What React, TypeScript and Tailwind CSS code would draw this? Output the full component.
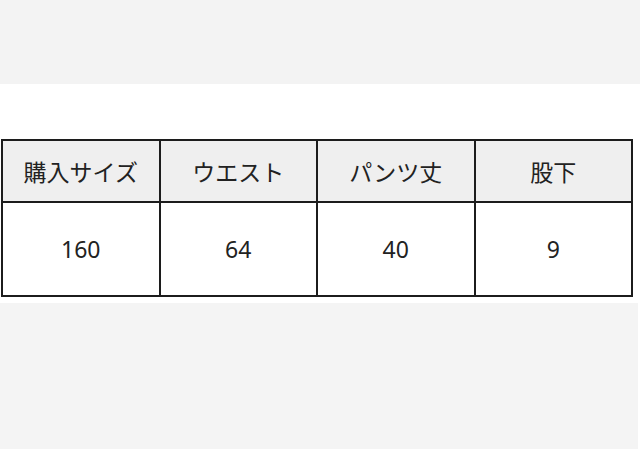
const headers = ['購入サイズ', 'ウエスト', 'パンツ丈', '股下']
const values = ['160', '64', '40', '9']

const App = () => {
    return (
        <div
            className="w-[640px] h-[449px] bg-[#f4f4f4] flex flex-col"
            style={{ fontFamily: '"Noto Sans", "Noto Sans CJK JP", sans-serif' }}
        >
            <div className="h-[84px] bg-[#f3f3f3]" />
            <div className="h-[219px] bg-white pt-[55px] pl-px">
                <table className="w-[632px] border-collapse text-[23px] text-[#222]">
                    <thead>
                        <tr className="bg-[#efefef]">
                            {headers.map((h) => (
                                <th
                                    key={h}
                                    className="h-[62px] w-1/4 border-2 border-[#1c1c1c] font-normal text-center pt-[3px]"
                                >
                                    {h}
                                </th>
                            ))}
                        </tr>
                    </thead>
                    <tbody>
                        <tr className="bg-white">
                            {values.map((v, i) => (
                                <td
                                    key={i}
                                    className="h-[94px] border-2 border-[#1c1c1c] text-center"
                                >
                                    {v}
                                </td>
                            ))}
                        </tr>
                    </tbody>
                </table>
            </div>
            <div className="flex-1 flex">
                <div className="flex-1 bg-[#f4f4f4]" />
                <div className="w-[2px] bg-white" />
            </div>
        </div>
    )
}

export default App
